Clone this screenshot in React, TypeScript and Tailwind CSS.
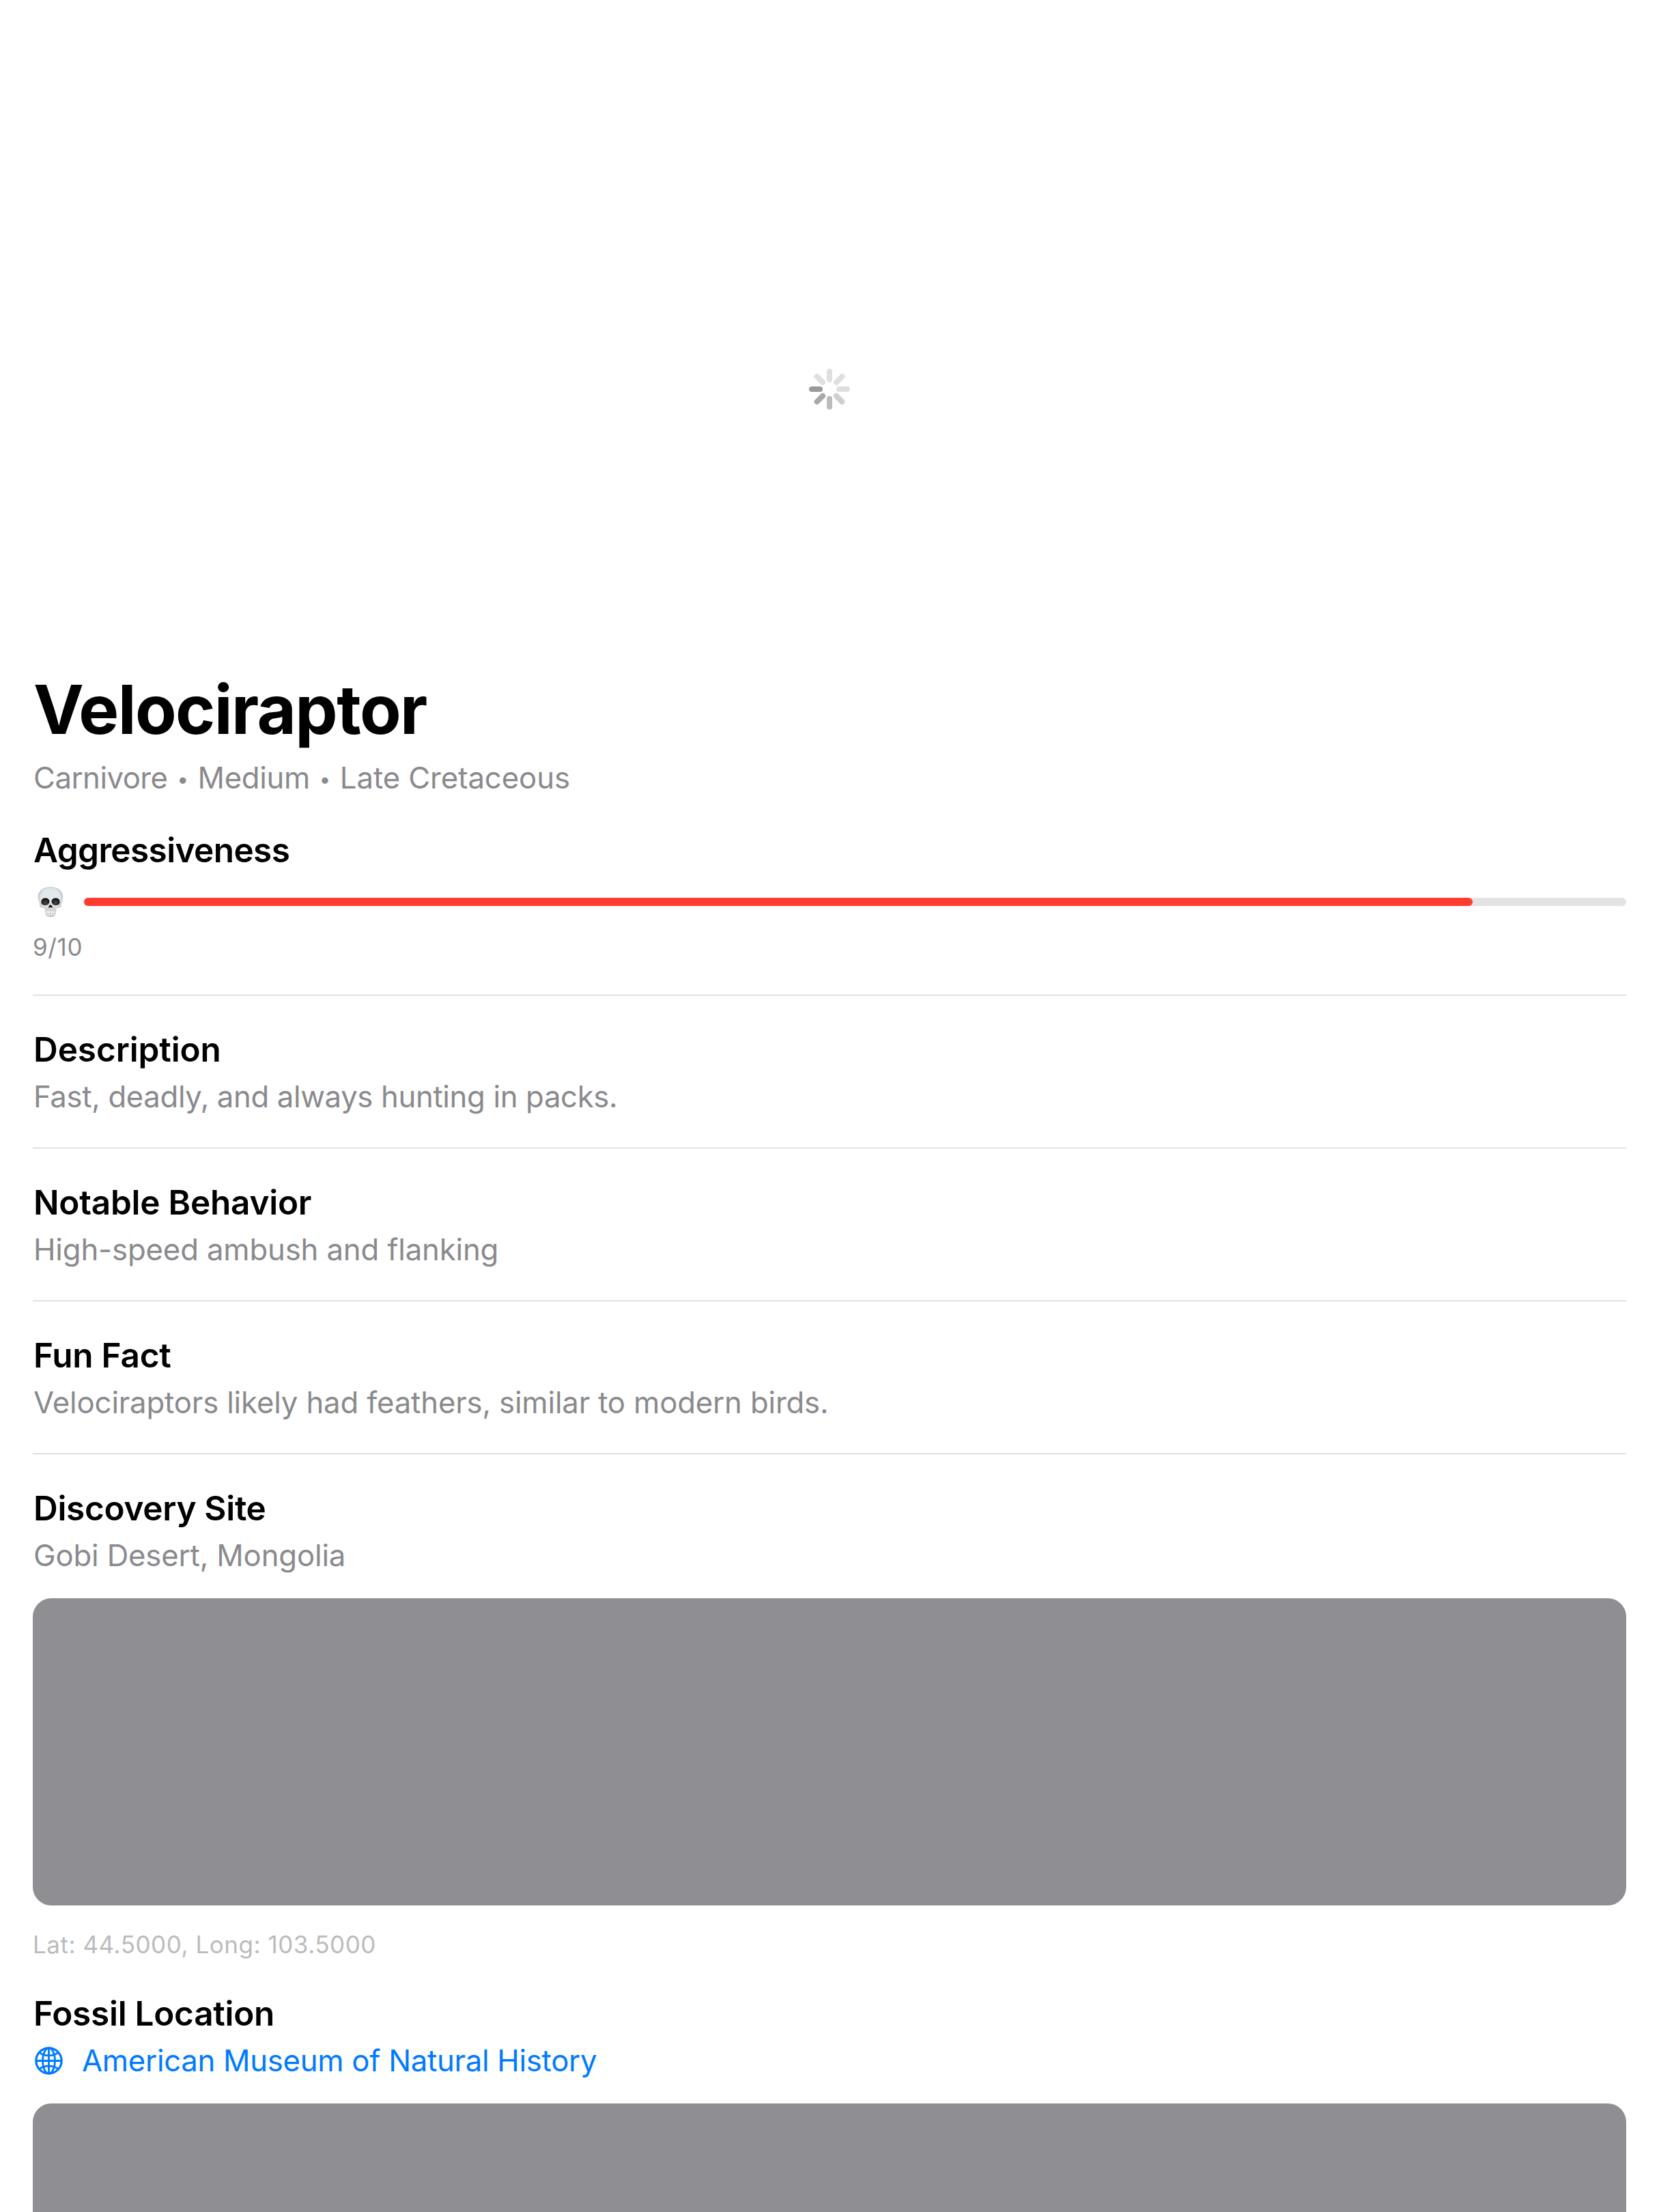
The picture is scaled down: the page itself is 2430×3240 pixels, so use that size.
import type { ReactNode } from 'react';

const SPOKES = ['#dfdfe0', '#dfdfe0', '#dfdfe0', '#cfcfd1', '#bcbcbf', '#a9a9ac', '#9a9a9d', '#dfdfe0'];

const SKULL_OUTLINE =
  'M19 1C8.500 1 .7 7 .7 15.500c0 3 .5 5.200 1.500 7.500.8 2 .8 3.600 1 5.400.3 2.600 2.700 3 5 3.500 2 .5 2.700 1.500 3 3.700l.7 5c.4 3 2.600 4.100 7.100 4.100s6.700-1.100 7.100-4.100l.7-5c.3-2.200 1-3.200 3-3.700 2.300-.5 4.700-.9 5-3.500.2-1.800.2-3.400 1-5.400 1-2.300 1.500-4.500 1.500-7.500C37.300 7 29.500 1 19 1Z';

function Spinner() {
  return (
    <svg width="60" height="60" viewBox="-30 -30 60 60" aria-label="Loading">
      {SPOKES.map((fill, i) => (
        <rect key={i} x="-4" y="-30" width="8" height="20" rx="4" fill={fill} transform={`rotate(${i * 45})`} />
      ))}
    </svg>
  );
}

function Skull() {
  return (
    <svg width="38" height="46" viewBox="0 0 38 46" className="ml-[7px] block shrink-0" aria-label="Skull">
      <defs>
        <linearGradient id="bone" x1="0" y1="0" x2="0" y2="1">
          <stop offset="0" stopColor="#d3dce1" />
          <stop offset="0.12" stopColor="#e0e8ec" />
          <stop offset="0.42" stopColor="#e3e8eb" />
          <stop offset="0.68" stopColor="#dcdcdc" />
          <stop offset="1" stopColor="#bebfbb" />
        </linearGradient>
        <radialGradient id="edge" cx="0.5" cy="0.42" r="0.56">
          <stop offset="0.68" stopColor="#9aa0a3" stopOpacity="0" />
          <stop offset="1" stopColor="#868c8e" stopOpacity="0.65" />
        </radialGradient>
        <radialGradient id="socket" cx="0.5" cy="0.65" r="0.6">
          <stop offset="0" stopColor="#4c4c4c" />
          <stop offset="0.6" stopColor="#262626" />
          <stop offset="1" stopColor="#0c0c0c" />
        </radialGradient>
      </defs>
      <path d={SKULL_OUTLINE} fill="url(#bone)" />
      <path d={SKULL_OUTLINE} fill="url(#edge)" />
      <path d="M5.400 23.200c0-4 2.300-5.800 6-5.800 3.600 0 6 1.800 6 4.800 0 3.500-2.400 5.700-6.200 5.700-3.800 0-5.800-1.800-5.800-4.700Z" fill="url(#socket)" />
      <path d="M32.600 23.200c0-4-2.300-5.800-6-5.800-3.600 0-6 1.800-6 4.800 0 3.500 2.400 5.700 6.200 5.700 3.800 0 5.800-1.800 5.800-4.700Z" fill="url(#socket)" />
      <path d="M19 27.300c-.9 0-1.900 1.400-2.800 2.900-.6 1 .4 1.600 1.400 1.200.5-.3.900-.7 1.400-.7s.9.400 1.400.7c1 .4 2-.2 1.400-1.200-.9-1.500-1.900-2.900-2.800-2.900Z" fill="#161616" />
      <path d="M11.500 35.500c2 1.400 4.600 1.800 7.500 1.800s5.500-.4 7.500-1.800l-.9 6c-1.600 1.200-3.800 1.600-6.600 1.600s-5-.4-6.600-1.600Z" fill="#b9b9b6" />
      <g fill="#f7f7f5">
        <rect x="12.400" y="36.200" width="2.400" height="3.400" rx="0.800" />
        <rect x="15.400" y="36.500" width="3.200" height="3.700" rx="0.800" />
        <rect x="19.400" y="36.500" width="3.200" height="3.700" rx="0.800" />
        <rect x="23.200" y="36.200" width="2.400" height="3.400" rx="0.800" />
        <rect x="13" y="40.300" width="2.200" height="2.600" rx="0.800" />
        <rect x="15.900" y="40.800" width="2.700" height="2.700" rx="0.800" />
        <rect x="19.400" y="40.800" width="2.700" height="2.700" rx="0.800" />
        <rect x="22.800" y="40.300" width="2.200" height="2.600" rx="0.800" />
      </g>
    </svg>
  );
}

function Globe() {
  return (
    <svg width="41" height="41" viewBox="0 0 41 41" fill="none" stroke="#007aff" strokeWidth="2.800" className="ml-[3px] block shrink-0">
      <circle cx="20.500" cy="20.500" r="18.700" strokeWidth="3.200" />
      <ellipse cx="20.500" cy="20.500" rx="9" ry="18.700" />
      <path d="M20.500 1.500v38M1.500 20.500h38M6.400 8.200c3.600 3.100 8.600 4.600 14.100 4.600s10.500-1.500 14.100-4.600M6.400 32.800c3.600-3.100 8.600-4.600 14.100-4.600s10.500 1.500 14.100 4.600" />
    </svg>
  );
}

function Heading({ children, className = 'tracking-[-0.24px]' }: { children: ReactNode; className?: string }) {
  return <h2 className={`h-[62px] pl-px text-[49.5px] leading-[62px] font-semibold whitespace-nowrap text-black ${className}`}>{children}</h2>;
}

function Body({ children, className = 'tracking-[-0.150px]' }: { children: ReactNode; className?: string }) {
  return <p className={`mt-3 h-[53px] pl-px text-[43.7px] leading-[54px] whitespace-nowrap text-[#8a8a8e] ${className}`}>{children}</p>;
}

function Divider() {
  return <div className="my-12 h-px bg-[#c5c5c7]" />;
}

function Bullet() {
  return <span className="inline-block w-[44px] text-center align-[3.500px] text-[30px] leading-none tracking-normal">•</span>;
}

export default function App() {
  return (
    <div className="flex h-[3240px] w-[2430px] flex-col overflow-hidden bg-white font-['Inter','Liberation_Sans',sans-serif]">
      <div className="flex h-[930px] shrink-0 items-center justify-center pt-[210px]">
        <Spinner />
      </div>
      <main className="flex shrink-0 flex-col px-12 pt-12">
        <h1 className="h-[122px] pl-px text-[99px] leading-[122px] font-bold tracking-[-1.570px] whitespace-nowrap text-black">Velociraptor</h1>
        <p className="mt-[13px] h-[53px] pl-px text-[43.7px] leading-[54px] tracking-[-0.100px] whitespace-nowrap text-[#8a8a8e]">
          <span className="tracking-[-0.500px]">Carnivore</span>
          <Bullet />
          <span className="tracking-[-0.350px]">Medium</span>
          <Bullet />
          Late Cretaceous
        </p>

        <section className="mt-12">
          <Heading className="tracking-[-0.600px]">Aggressiveness</Heading>
          <div className="mt-[18px] flex h-[54px] items-center">
            <Skull />
            <div className="ml-[30px] h-3 flex-1 rounded-full bg-[#e3e3e4]">
              <div className="h-3 w-[2034px] rounded-full bg-[#ff3b30]" />
            </div>
          </div>
          <p className="mt-[18px] h-[43px] text-[35px] leading-[43px] tracking-[0.650px] text-[#8a8a8e]">9/10</p>
        </section>
        <Divider />
        <section>
          <Heading className="tracking-[-0.1px]">Description</Heading>
          <Body className="tracking-[-0.350px]">Fast, deadly, and always hunting in packs.</Body>
        </section>
        <Divider />
        <section>
          <Heading>Notable Behavior</Heading>
          <Body>High-speed ambush and flanking</Body>
        </section>
        <Divider />
        <section>
          <Heading>Fun Fact</Heading>
          <Body>Velociraptors likely had feathers, similar to modern birds.</Body>
        </section>
        <Divider />
        <section>
          <Heading className="tracking-[-0.300px]">Discovery Site</Heading>
          <Body>Gobi Desert, Mongolia</Body>
          <div className="mt-9 h-[450px] rounded-[27px] bg-[#8e8e93]" />
          <p className="mt-9 h-[43px] text-[35px] leading-[43px] tracking-[0.530px] text-[#bbbbbd]">Lat: 44.5000, Long: 103.5000</p>
        </section>
        <section className="mt-12">
          <Heading className="tracking-[-0.270px]">Fossil Location</Heading>
          <div className="mt-3 flex h-[53px] items-center text-[43.7px] leading-[53px] tracking-[-0.280px] text-[#007aff]">
            <Globe />
            <span className="ml-[28px] whitespace-nowrap">American Museum of Natural History</span>
          </div>
          <div className="mt-9 h-[450px] rounded-[27px] bg-[#8e8e93]" />
        </section>
      </main>
    </div>
  );
}
